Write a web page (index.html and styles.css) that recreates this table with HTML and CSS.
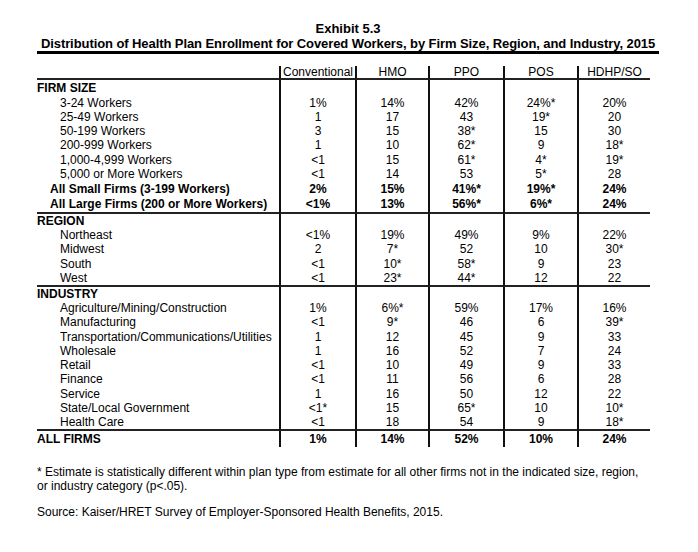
FILE: index.html
```html
<!DOCTYPE html>
<html>
<head>
<meta charset="utf-8">
<link rel="stylesheet" href="styles.css">
</head>
<body>
<div class="page">
  <div class="title">
    <div class="t1">Exhibit 5.3</div>
    <div class="t2">Distribution of Health Plan Enrollment for Covered Workers, by Firm Size, Region, and Industry, 2015</div>
  </div>
  <table class="data">
    <thead>
      <tr class="head"><th class="lab"></th><th class="c1">Conventional</th><th class="c2">HMO</th><th class="c3">PPO</th><th class="c4">POS</th><th class="c5">HDHP/SO</th></tr>
    </thead>
    <tbody>
      <tr class="sec first"><td class="lab">FIRM SIZE</td><td></td><td></td><td></td><td></td><td></td></tr>
      <tr><td class="lab sub">3-24 Workers</td><td>1%</td><td>14%</td><td>42%</td><td>24%*</td><td>20%</td></tr>
      <tr><td class="lab sub">25-49 Workers</td><td>1</td><td>17</td><td>43</td><td>19*</td><td>20</td></tr>
      <tr><td class="lab sub">50-199 Workers</td><td>3</td><td>15</td><td>38*</td><td>15</td><td>30</td></tr>
      <tr><td class="lab sub">200-999 Workers</td><td>1</td><td>10</td><td>62*</td><td>9</td><td>18*</td></tr>
      <tr><td class="lab sub">1,000-4,999 Workers</td><td>&lt;1</td><td>15</td><td>61*</td><td>4*</td><td>19*</td></tr>
      <tr><td class="lab sub">5,000 or More Workers</td><td>&lt;1</td><td>14</td><td>53</td><td>5*</td><td>28</td></tr>
      <tr class="tot"><td class="lab mid">All Small Firms (3-199 Workers)</td><td>2%</td><td>15%</td><td>41%*</td><td>19%*</td><td>24%</td></tr>
      <tr class="tot end"><td class="lab mid">All Large Firms (200 or More Workers)</td><td>&lt;1%</td><td>13%</td><td>56%*</td><td>6%*</td><td>24%</td></tr>
      <tr class="sec"><td class="lab">REGION</td><td></td><td></td><td></td><td></td><td></td></tr>
      <tr><td class="lab sub">Northeast</td><td>&lt;1%</td><td>19%</td><td>49%</td><td>9%</td><td>22%</td></tr>
      <tr><td class="lab sub">Midwest</td><td>2</td><td>7*</td><td>52</td><td>10</td><td>30*</td></tr>
      <tr><td class="lab sub">South</td><td>&lt;1</td><td>10*</td><td>58*</td><td>9</td><td>23</td></tr>
      <tr class="end"><td class="lab sub">West</td><td>&lt;1</td><td>23*</td><td>44*</td><td>12</td><td>22</td></tr>
      <tr class="sec"><td class="lab">INDUSTRY</td><td></td><td></td><td></td><td></td><td></td></tr>
      <tr><td class="lab sub">Agriculture/Mining/Construction</td><td>1%</td><td>6%*</td><td>59%</td><td>17%</td><td>16%</td></tr>
      <tr><td class="lab sub">Manufacturing</td><td>&lt;1</td><td>9*</td><td>46</td><td>6</td><td>39*</td></tr>
      <tr><td class="lab sub">Transportation/Communications/Utilities</td><td>1</td><td>12</td><td>45</td><td>9</td><td>33</td></tr>
      <tr><td class="lab sub">Wholesale</td><td>1</td><td>16</td><td>52</td><td>7</td><td>24</td></tr>
      <tr><td class="lab sub">Retail</td><td>&lt;1</td><td>10</td><td>49</td><td>9</td><td>33</td></tr>
      <tr><td class="lab sub">Finance</td><td>&lt;1</td><td>11</td><td>56</td><td>6</td><td>28</td></tr>
      <tr><td class="lab sub">Service</td><td>1</td><td>16</td><td>50</td><td>12</td><td>22</td></tr>
      <tr><td class="lab sub">State/Local Government</td><td>&lt;1*</td><td>15</td><td>65*</td><td>10</td><td>10*</td></tr>
      <tr class="end"><td class="lab sub">Health Care</td><td>&lt;1</td><td>18</td><td>54</td><td>9</td><td>18*</td></tr>
      <tr class="tot all"><td class="lab">ALL FIRMS</td><td>1%</td><td>14%</td><td>52%</td><td>10%</td><td>24%</td></tr>
    </tbody>
  </table>
  <p class="note">* Estimate is statistically different within plan type from estimate for all other firms not in the indicated size, region,<br>or industry category (p&lt;.05).</p>
  <p class="note source">Source: Kaiser/HRET Survey of Employer-Sponsored Health Benefits, 2015.</p>
</div>
</body>
</html>
```

FILE: styles.css
```css
html, body {
  margin: 0;
  padding: 0;
  background: #fff;
}
body {
  font-family: "Liberation Sans", Arial, sans-serif;
  color: #000;
  font-size: 12px;
}
.page {
  width: 698px;
  height: 552px;
  padding-top: 21px;
  box-sizing: border-box;
  overflow: hidden;
}
.title {
  margin: 0 39px 0 37px;
  border-bottom: 3px solid #000;
  text-align: center;
  font-weight: bold;
  font-size: 13px;
  line-height: 15px;
  white-space: nowrap;
}
.title .t2 {
  letter-spacing: -0.08px;
  margin: 0 -10px;
}
.data {
  margin: 12px 0 0 37px;
  border-collapse: separate;
  border-spacing: 0;
  table-layout: fixed;
  width: 613px;
}
.data th, .data td {
  box-sizing: border-box;
  padding: 0;
  text-align: center;
  font-weight: normal;
  border-left: 2px solid #111;
  height: 14.25px;
  line-height: 14px;
  white-space: nowrap;
  vertical-align: middle;
}
.data th {
  height: 14px;
  line-height: 12px;
  border-bottom: 2px solid #222;
}
.data .lab {
  border-left: none;
  text-align: left;
}
.data th.lab { width: 242px; }
.data th.c1 { width: 76px; }
.data th.c2 { width: 73px; }
.data th.c3 { width: 75px; }
.data th.c4 { width: 74px; }
.data th.c5 { width: 73px; }
.data .sec td {
  font-weight: bold;
  height: 14px;
}
.data .sec.first td {
  height: 15.5px;
}
.data .sub {
  padding-left: 23px;
}
.data .mid {
  padding-left: 13px;
}
.data .tot td {
  font-weight: bold;
  height: 15.5px;
}
.data .end td {
  border-bottom: 2px solid #222;
  height: 16.25px;
}
.data .tot.end td {
  height: 17.5px;
}
.data .all td {
  height: 15.25px;
}
.note {
  margin: 18.5px 0 0 37px;
  line-height: 14px;
}
.note.source {
  margin-top: 11.5px;
}
```
